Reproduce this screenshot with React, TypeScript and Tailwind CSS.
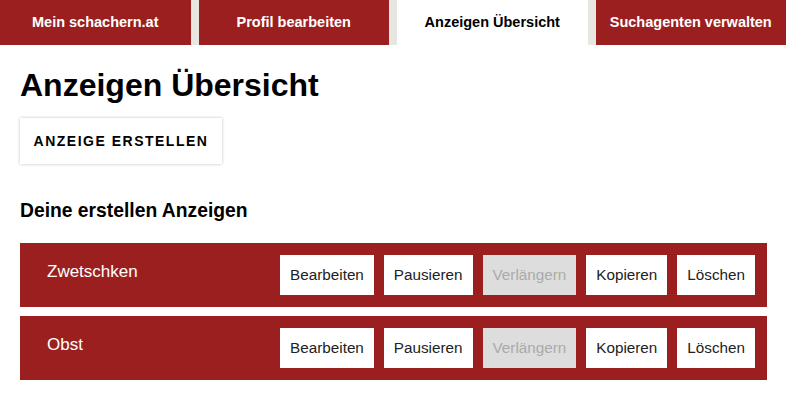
const tabs = [
  { label: "Mein schachern.at" },
  { label: "Profil bearbeiten" },
  { label: "Anzeigen Übersicht", active: true },
  { label: "Suchagenten verwalten" },
];

const ads = ["Zwetschken", "Obst"];

const actions = [
  { label: "Bearbeiten" },
  { label: "Pausieren" },
  { label: "Verlängern", disabled: true },
  { label: "Kopieren" },
  { label: "Löschen" },
];

export default function App() {
  return (
    <div className="min-h-screen bg-white font-['Liberation_Sans',Arial,sans-serif] text-black">
      <nav className="flex h-[45px] gap-2 bg-[#e8e6e0]">
        {tabs.map((tab) => (
          <a
            key={tab.label}
            className={
              tab.active
                ? "flex flex-1 items-center justify-center bg-white text-[14.5px] font-bold text-black"
                : "flex flex-1 items-center justify-center bg-[#9b1f1f] text-[14.5px] font-bold text-white"
            }
          >
            {tab.label}
          </a>
        ))}
      </nav>

      <main className="px-5 pr-[19px]">
        <h1 className="mt-[21px] text-[32px] font-bold leading-[38px]">Anzeigen Übersicht</h1>

        <button className="mt-[14px] h-[46px] w-[202px] bg-white text-[14px] font-bold uppercase tracking-[1.5px] shadow-[0_0_3px_rgba(0,0,0,0.25)]">
          Anzeige erstellen
        </button>

        <h2 className="mt-[35px] text-[19.3px] font-bold leading-[24px]">Deine erstellen Anzeigen</h2>

        <div className="mt-5 flex flex-col gap-[9px]">
          {ads.map((ad) => (
            <div key={ad} className="flex h-16 items-center justify-between bg-[#9b1f1f] pl-[27px] pr-3">
              <span className="self-start pt-[19px] text-[17px] leading-5 text-white">{ad}</span>
              <div className="flex gap-[10px]">
                {actions.map((a) => (
                  <button
                    key={a.label}
                    className={
                      a.disabled
                        ? "h-10 bg-[#dddddd] px-[10px] text-[15.25px] text-[#aaaaaa]"
                        : "h-10 bg-white px-[10px] text-[15.25px] text-[#222222]"
                    }
                  >
                    {a.label}
                  </button>
                ))}
              </div>
            </div>
          ))}
        </div>
      </main>
    </div>
  );
}
